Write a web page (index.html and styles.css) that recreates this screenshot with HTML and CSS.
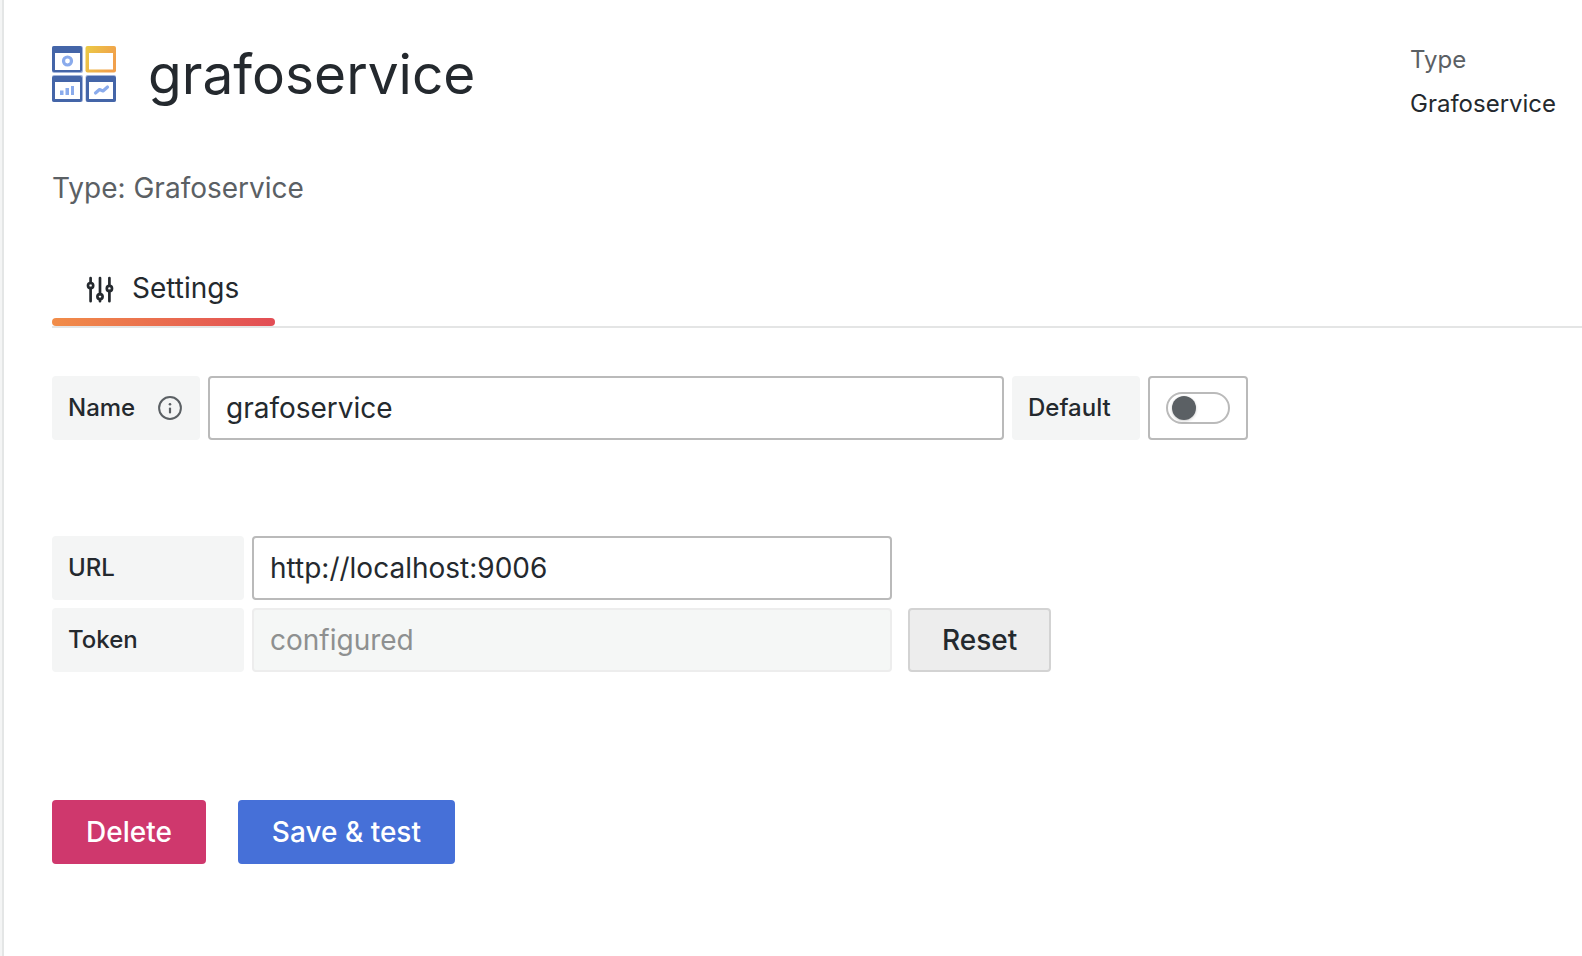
FILE: index.html
```html
<!DOCTYPE html>
<html lang="en">
<head>
<meta charset="utf-8">
<title>grafoservice: Settings</title>
<link rel="stylesheet" href="styles.css">
</head>
<body>
<main class="page">
  <header class="page-header">
    <div class="title-group">
      <svg class="logo" viewBox="0 0 64 56" aria-hidden="true">
        <defs>
          <linearGradient id="gold" x1="0" y1="0" x2="1" y2="0.4">
            <stop offset="0" stop-color="#ebcb45"/>
            <stop offset="1" stop-color="#f1a04b"/>
          </linearGradient>
        </defs>
        <rect width="31" height="27" rx="2" fill="#a3b4da"/>
        <rect width="30" height="26" rx="2" fill="#4465a8"/>
        <rect x="3" y="7" width="25" height="17" fill="#fff"/>
        <circle cx="15.500" cy="15" r="4" fill="none" stroke="#8aabec" stroke-width="3.200"/>
        <rect x="33.500" width="30.500" height="26.600" rx="2" fill="url(#gold)"/>
        <rect x="37" y="7" width="24" height="16.500" fill="#fff"/>
        <rect y="29" width="31" height="27" rx="2" fill="#a3b4da"/>
        <rect y="30" width="30" height="26" rx="2" fill="#4465a8"/>
        <rect x="3" y="36" width="25" height="17" fill="#fff"/>
        <path d="M8 44.500h3.500v4.500H8zM13.500 42H17v7h-3.500zM19 40h3v9h-3z" fill="#8aabec"/>
        <rect x="33.500" y="29" width="30.500" height="27" rx="2" fill="#a3b4da"/>
        <rect x="34" y="30" width="30" height="26" rx="2" fill="#4465a8"/>
        <rect x="37" y="36" width="24" height="17" fill="#fff"/>
        <path d="M43.500 47l4-3.500 3.500 1.500 4.500-4" fill="none" stroke="#8aabec" stroke-width="3.200" stroke-linecap="round" stroke-linejoin="round"/>
      </svg>
      <h1 class="title">grafoservice</h1>
    </div>
    <dl class="info">
      <dt class="info-label">Type</dt>
      <dd class="info-value">Grafoservice</dd>
    </dl>
  </header>
  <p class="subtitle">Type: Grafoservice</p>
  <nav class="tabs">
    <a class="tab" href="#settings" aria-current="page">
      <svg class="tab-icon" viewBox="0 0 32 32" fill="none" stroke="currentColor" stroke-width="2.700" stroke-linecap="round" aria-hidden="true">
        <path d="M6.600 6v5M6.600 16v13.200M16 6v16.400M16 27.200v2M25.400 6v7.600M25.400 18.800v10.400"/>
        <circle cx="6.600" cy="13.600" r="2.600"/>
        <circle cx="16" cy="24.600" r="2.600"/>
        <circle cx="25.400" cy="16.400" r="2.600"/>
      </svg>
      <span>Settings</span>
    </a>
  </nav>
  <form class="form" id="settings">
    <div class="row">
      <div class="label label-name">
        <label for="name">Name</label>
        <svg class="info-icon" viewBox="0 0 24 24" aria-hidden="true">
          <circle cx="12" cy="12" r="10.900" fill="none" stroke="currentColor" stroke-width="2"/>
          <path d="M12 12.500v4" stroke="currentColor" stroke-width="2.200" stroke-linecap="round"/>
          <circle cx="12" cy="8.200" r="1.300" fill="currentColor"/>
        </svg>
      </div>
      <input class="input input-name" id="name" type="text" value="grafoservice">
      <label class="label label-default" for="default">Default</label>
      <div class="switch-box">
        <input class="switch" id="default" type="checkbox" role="switch">
      </div>
    </div>
    <div class="group">
      <div class="row">
        <label class="label label-wide" for="url">URL</label>
        <input class="input input-wide" id="url" type="text" value="http://localhost:9006">
      </div>
      <div class="row">
        <label class="label label-wide" for="token">Token</label>
        <input class="input input-wide" id="token" type="text" value="configured" disabled>
        <button class="button button-reset" type="button">Reset</button>
      </div>
    </div>
    <div class="actions">
      <button class="button button-delete" type="button">Delete</button>
      <button class="button button-save" type="button">Save &amp; test</button>
    </div>
  </form>
</main>
</body>
</html>
```
FILE: styles.css
```css
* {
  box-sizing: border-box;
}

body {
  margin: 0;
  padding-left: 2px;
  background: #f4f5f5;
  color: #24292e;
  font-family: Inter, "Liberation Sans", sans-serif;
  font-size: 28px;
  line-height: 44px;
}

.page {
  min-height: 100vh;
  padding: 36px 0 48px 48px;
  border-left: 2px solid #e4e6e6;
  background: #fff;
}

.page-header {
  display: flex;
  justify-content: space-between;
  padding-right: 24px;
}

.title-group {
  display: flex;
  align-items: center;
  gap: 32px;
  height: 76px;
}

.logo {
  width: 64px;
  height: 56px;
}

.title {
  margin: 0;
  font-size: 55px;
  font-weight: 400;
  line-height: 64px;
}

.info {
  min-width: 148px;
  margin: 0;
  padding-top: 2px;
  font-size: 24px;
}

.info-label {
  color: #5b6064;
}

.info-value {
  margin: 0;
}

.subtitle {
  margin: 40px 0 0;
  color: #5b6064;
}

.tabs {
  display: flex;
  margin-top: 50px;
  border-bottom: 2px solid #e4e5e5;
}

.tab {
  position: relative;
  display: flex;
  align-items: center;
  gap: 16px;
  padding: 6px 36px 16px 32px;
  color: inherit;
  text-decoration: none;
}

.tab::after {
  content: "";
  position: absolute;
  right: 0;
  bottom: 0;
  left: 0;
  height: 8px;
  border-radius: 4px;
  background: linear-gradient(90deg, #f18d49, #e24d55);
}

.tab-icon {
  width: 32px;
  height: 32px;
}

.form {
  padding-top: 48px;
}

.row {
  display: flex;
  gap: 8px;
}

.group {
  display: grid;
  gap: 8px;
  margin-top: 96px;
}

.label {
  display: flex;
  align-items: center;
  flex: none;
  height: 64px;
  padding: 0 16px;
  border-radius: 4px;
  background: #f4f5f5;
  font-size: 24px;
  font-weight: 500;
}

.label-name {
  justify-content: space-between;
  width: 148px;
}

.label-default {
  width: 128px;
}

.label-wide {
  width: 192px;
}

.info-icon {
  width: 24px;
  height: 24px;
  margin-right: 2px;
  color: #5b6064;
}

.input {
  min-width: 0;
  height: 64px;
  padding: 0 16px;
  border: 2px solid #bababa;
  border-radius: 4px;
  background: #fff;
  color: inherit;
  font: inherit;
}

.input:disabled {
  border-color: #ededed;
  background: #f5f7f6;
  color: #8e9090;
}

.input-name {
  width: 796px;
}

.input-wide {
  width: 640px;
}

.switch-box {
  display: flex;
  align-items: center;
  padding: 0 16px;
  border: 2px solid #bababa;
  border-radius: 4px;
}

.switch {
  appearance: none;
  display: flex;
  align-items: center;
  width: 64px;
  height: 32px;
  margin: 0;
  padding: 0 4px;
  border: 2px solid #bababa;
  border-radius: 16px;
}

.switch::before {
  content: "";
  width: 24px;
  height: 24px;
  border-radius: 50%;
  background: #5b6064;
  box-shadow: 0 1px 3px #00000033;
}

.switch:checked {
  justify-content: flex-end;
}

.actions {
  display: flex;
  gap: 32px;
  margin-top: 128px;
}

.button {
  height: 64px;
  padding: 0 32px;
  border: 2px solid transparent;
  border-radius: 4px;
  color: #fff;
  font: inherit;
  font-weight: 500;
  white-space: nowrap;
}

.button-reset {
  margin-left: 8px;
  border-color: #d3d3d3;
  background: #ededed;
  color: #24292e;
}

.button-delete {
  border-color: #cf386d;
  background: #cf386d;
}

.button-save {
  border-color: #4670d8;
  background: #4670d8;
}
```
